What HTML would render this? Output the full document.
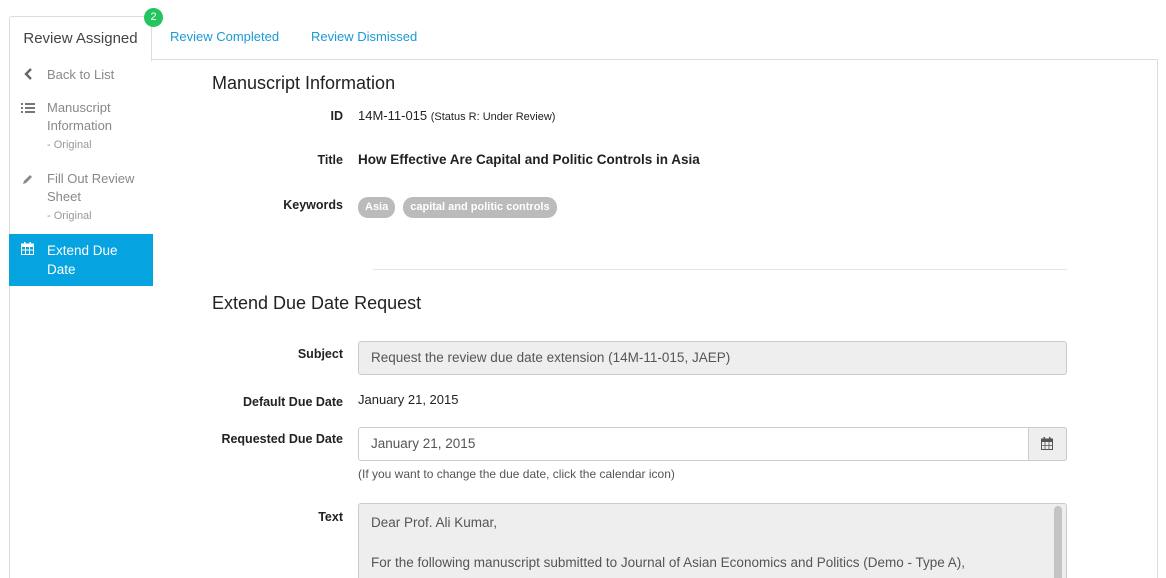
<!DOCTYPE html>
<html><head><style>
*{box-sizing:border-box;margin:0;padding:0}
html,body{width:1166px;height:578px;overflow:hidden}
body{background:#fff;font-family:"Liberation Sans",sans-serif;color:#222;position:relative;font-size:13px}
.abs{position:absolute}
.tab{left:9px;top:16px;width:143px;height:45px;border:1px solid #ddd;border-bottom:none;background:#fff;font-size:15px;color:#444;text-align:center;line-height:44px;border-radius:3px 3px 0 0}
.badge{left:144px;top:8px;width:19px;height:19px;border-radius:50%;background:#22c55e;color:#fff;font-size:11px;text-align:center;line-height:19px}
.link{color:#1a9ad6;font-size:13px;top:29px}
.hline{left:152px;top:59px;width:1006px;height:1px;background:#ddd}
.vl{left:9px;top:60px;width:1px;height:520px;background:#ddd}
.vr{left:1157px;top:59px;width:1px;height:520px;background:#ddd}
.side{color:#888;font-size:13px;line-height:18px}
.small{font-size:11px;color:#999}
.active{left:9px;top:234px;width:144px;height:52px;background:#05a3e0}
h2{position:absolute;font-weight:normal;font-size:18px;color:#222;left:212px}
.lab{position:absolute;right:823px;font-weight:bold;font-size:12.5px;text-align:right}
.val{position:absolute;left:358px;font-size:13px}
.pill{display:inline-block;background:#bbb;color:#fff;font-weight:bold;font-size:11px;border-radius:10px;padding:0 7px;line-height:21px;margin-right:8px}
.inp{position:absolute;left:358px;width:709px;height:34px;border:1px solid #ccc;border-radius:3px;background:#eee;padding-left:12px;line-height:32px;font-size:13.5px;color:#555}
</style></head><body>
<div class="abs tab">Review Assigned</div>
<div class="abs badge">2</div>
<div class="abs link" style="left:170px">Review Completed</div>
<div class="abs link" style="left:311px">Review Dismissed</div>
<div class="abs hline"></div>
<div class="abs vl"></div>
<div class="abs vr"></div>

<svg class="abs" style="left:23px;top:68px" width="10" height="12" viewBox="0 0 10 12"><path d="M8 1L3 6l5 5" stroke="#666" stroke-width="2.4" fill="none"/></svg>
<div class="abs side" style="left:47px;top:66px">Back to List</div>
<svg class="abs" style="left:21px;top:103px" width="14" height="11"><g fill="#777"><rect x="0" y="0" width="2" height="2"/><rect x="4" y="0" width="10" height="2"/><rect x="0" y="4" width="2" height="2"/><rect x="4" y="4" width="10" height="2"/><rect x="0" y="8" width="2" height="2"/><rect x="4" y="8" width="10" height="2"/></g></svg>
<div class="abs side" style="left:47px;top:99px">Manuscript<br>Information</div>
<div class="abs small" style="left:47px;top:139px">- Original</div>
<svg class="abs" style="left:21px;top:173px" width="13" height="13"><path d="M2 11l1-3 6-6 2 2-6 6z" fill="#888"/></svg>
<div class="abs side" style="left:47px;top:170px">Fill Out Review<br>Sheet</div>
<div class="abs small" style="left:47px;top:210px">- Original</div>
<div class="abs active"></div>
<svg class="abs" style="left:21px;top:242px" width="13" height="13"><rect x="0.5" y="2" width="12" height="10.5" fill="none" stroke="#fff"/><rect x="0.5" y="2" width="12" height="3" fill="#fff"/><rect x="3" y="0" width="1.5" height="3" fill="#fff"/><rect x="8.5" y="0" width="1.5" height="3" fill="#fff"/><path d="M0.5 8h12M4.5 5v7M8.5 5v7" stroke="#fff"/></svg>
<div class="abs side" style="left:47px;top:241px;color:#fff;font-size:13.5px;line-height:19px">Extend Due<br>Date</div>

<h2 style="top:73px">Manuscript Information</h2>
<div class="lab" style="top:109px">ID</div>
<div class="val" style="top:108px">14M-11-015 <span style="font-size:11px">(Status R: Under Review)</span></div>
<div class="lab" style="top:153px">Title</div>
<div class="val" style="top:152px;font-weight:bold;font-size:13.5px">How Effective Are Capital and Politic Controls in Asia</div>
<div class="lab" style="top:198px">Keywords</div>
<div class="val" style="top:197px"><span class="pill">Asia</span><span class="pill">capital and politic controls</span></div>
<div class="abs" style="left:373px;top:269px;width:694px;height:1px;background:#e5e5e5"></div>

<h2 style="top:293px">Extend Due Date Request</h2>
<div class="lab" style="top:347px">Subject</div>
<div class="inp" style="top:341px">Request the review due date extension (14M-11-015, JAEP)</div>
<div class="lab" style="top:395px">Default Due Date</div>
<div class="val" style="top:392px">January 21, 2015</div>
<div class="lab" style="top:432px">Requested Due Date</div>
<div class="inp" style="top:427px;background:#fff">January 21, 2015</div>
<div class="abs" style="left:1028px;top:427px;width:39px;height:34px;background:#eee;border:1px solid #ccc;border-radius:0 3px 3px 0"></div>
<svg class="abs" style="left:1041px;top:437px" width="12" height="13"><rect x="0.5" y="2" width="11" height="10.5" fill="none" stroke="#555"/><rect x="0.5" y="2" width="11" height="3" fill="#555"/><rect x="2.5" y="0" width="1.5" height="3" fill="#555"/><rect x="8" y="0" width="1.5" height="3" fill="#555"/><path d="M0.5 8.5h11M4 5v7M8 5v7" stroke="#555" stroke-width=".8"/></svg>
<div class="val" style="top:467px;font-size:12px;color:#555">(If you want to change the due date, click the calendar icon)</div>
<div class="lab" style="top:510px">Text</div>
<div class="inp" style="top:503px;height:90px;line-height:20px;padding-top:9px">Dear Prof. Ali Kumar,<br><br>For the following manuscript submitted to Journal of Asian Economics and Politics (Demo - Type A),</div>
<div class="abs" style="left:1054px;top:506px;width:8px;height:80px;background:#c4c4c4;border-radius:4px"></div>
</body></html>
